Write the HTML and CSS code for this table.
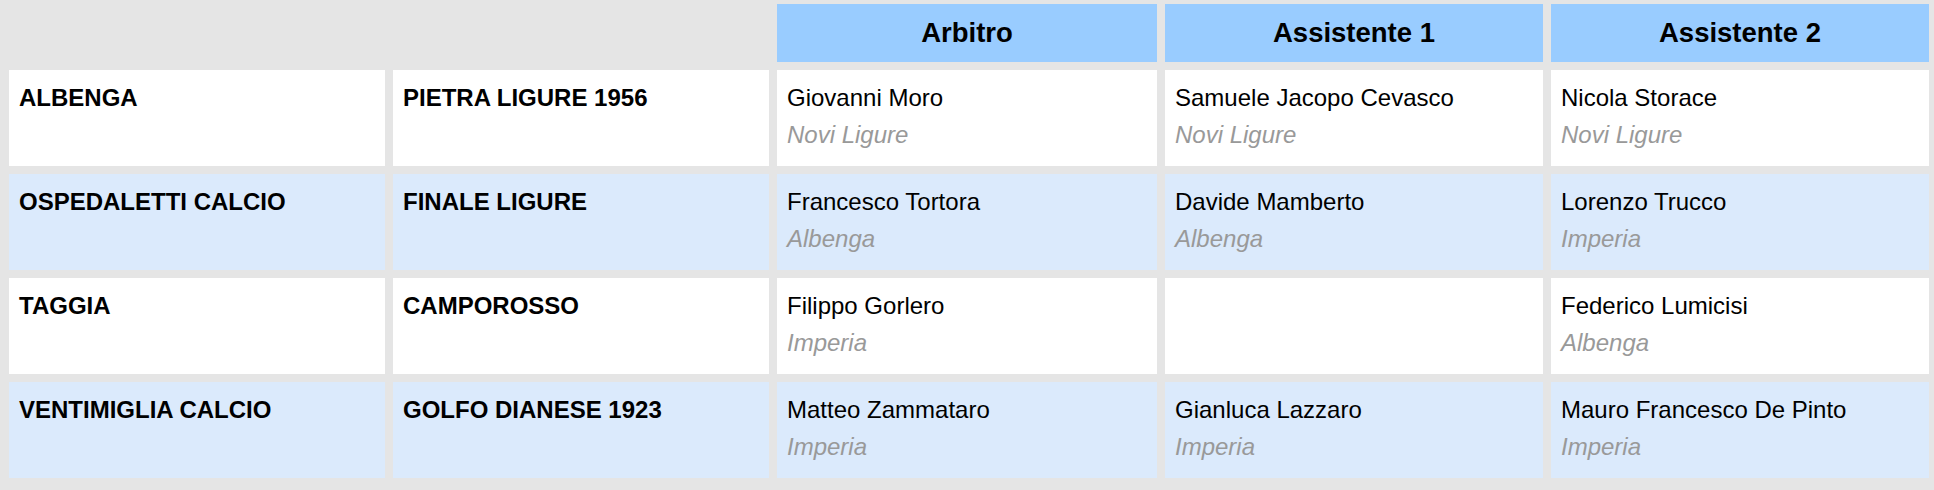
FILE: index.html
```html
<!DOCTYPE html>
<html lang="it">
<head>
<meta charset="utf-8">
<title>Designazioni arbitrali</title>
<link rel="stylesheet" href="styles.css">
</head>
<body>
<div class="grid">
  <div class="hd empty"></div>
  <div class="hd empty"></div>
  <div class="hd">Arbitro</div>
  <div class="hd">Assistente 1</div>
  <div class="hd">Assistente 2</div>

  <div class="cell team">ALBENGA</div>
  <div class="cell team">PIETRA LIGURE 1956</div>
  <div class="cell"><div class="name">Giovanni Moro</div><div class="city">Novi Ligure</div></div>
  <div class="cell"><div class="name">Samuele Jacopo Cevasco</div><div class="city">Novi Ligure</div></div>
  <div class="cell"><div class="name">Nicola Storace</div><div class="city">Novi Ligure</div></div>

  <div class="cell alt team">OSPEDALETTI CALCIO</div>
  <div class="cell alt team">FINALE LIGURE</div>
  <div class="cell alt"><div class="name">Francesco Tortora</div><div class="city">Albenga</div></div>
  <div class="cell alt"><div class="name">Davide Mamberto</div><div class="city">Albenga</div></div>
  <div class="cell alt"><div class="name">Lorenzo Trucco</div><div class="city">Imperia</div></div>

  <div class="cell team">TAGGIA</div>
  <div class="cell team">CAMPOROSSO</div>
  <div class="cell"><div class="name">Filippo Gorlero</div><div class="city">Imperia</div></div>
  <div class="cell"></div>
  <div class="cell"><div class="name">Federico Lumicisi</div><div class="city">Albenga</div></div>

  <div class="cell alt team">VENTIMIGLIA CALCIO</div>
  <div class="cell alt team">GOLFO DIANESE 1923</div>
  <div class="cell alt"><div class="name">Matteo Zammataro</div><div class="city">Imperia</div></div>
  <div class="cell alt"><div class="name">Gianluca Lazzaro</div><div class="city">Imperia</div></div>
  <div class="cell alt"><div class="name">Mauro Francesco De Pinto</div><div class="city">Imperia</div></div>
</div>
</body>
</html>
```

FILE: styles.css
```css
html, body {
  margin: 0;
  padding: 0;
}

body {
  background: #e5e5e5;
  font-family: "Liberation Sans", Arial, Helvetica, sans-serif;
  color: #000;
  height: 490px;
  overflow: hidden;
}

.grid {
  display: grid;
  grid-template-columns: 376px 376px 380px 378px 378px;
  grid-template-rows: 58px repeat(4, 96px);
  column-gap: 8px;
  row-gap: 8px;
  padding: 4px 0 0 9px;
}

.hd {
  background: #99ccff;
  font-weight: bold;
  font-size: 27.5px;
  display: flex;
  align-items: center;
  justify-content: center;
}

.hd.empty {
  background: transparent;
}

.cell {
  background: #ffffff;
  padding: 9px 10px 0 10px;
  font-size: 24px;
  line-height: 37px;
}

.cell.alt {
  background: #dbeafc;
}

.team {
  font-weight: bold;
}

.city {
  color: #999999;
  font-style: italic;
}
```
